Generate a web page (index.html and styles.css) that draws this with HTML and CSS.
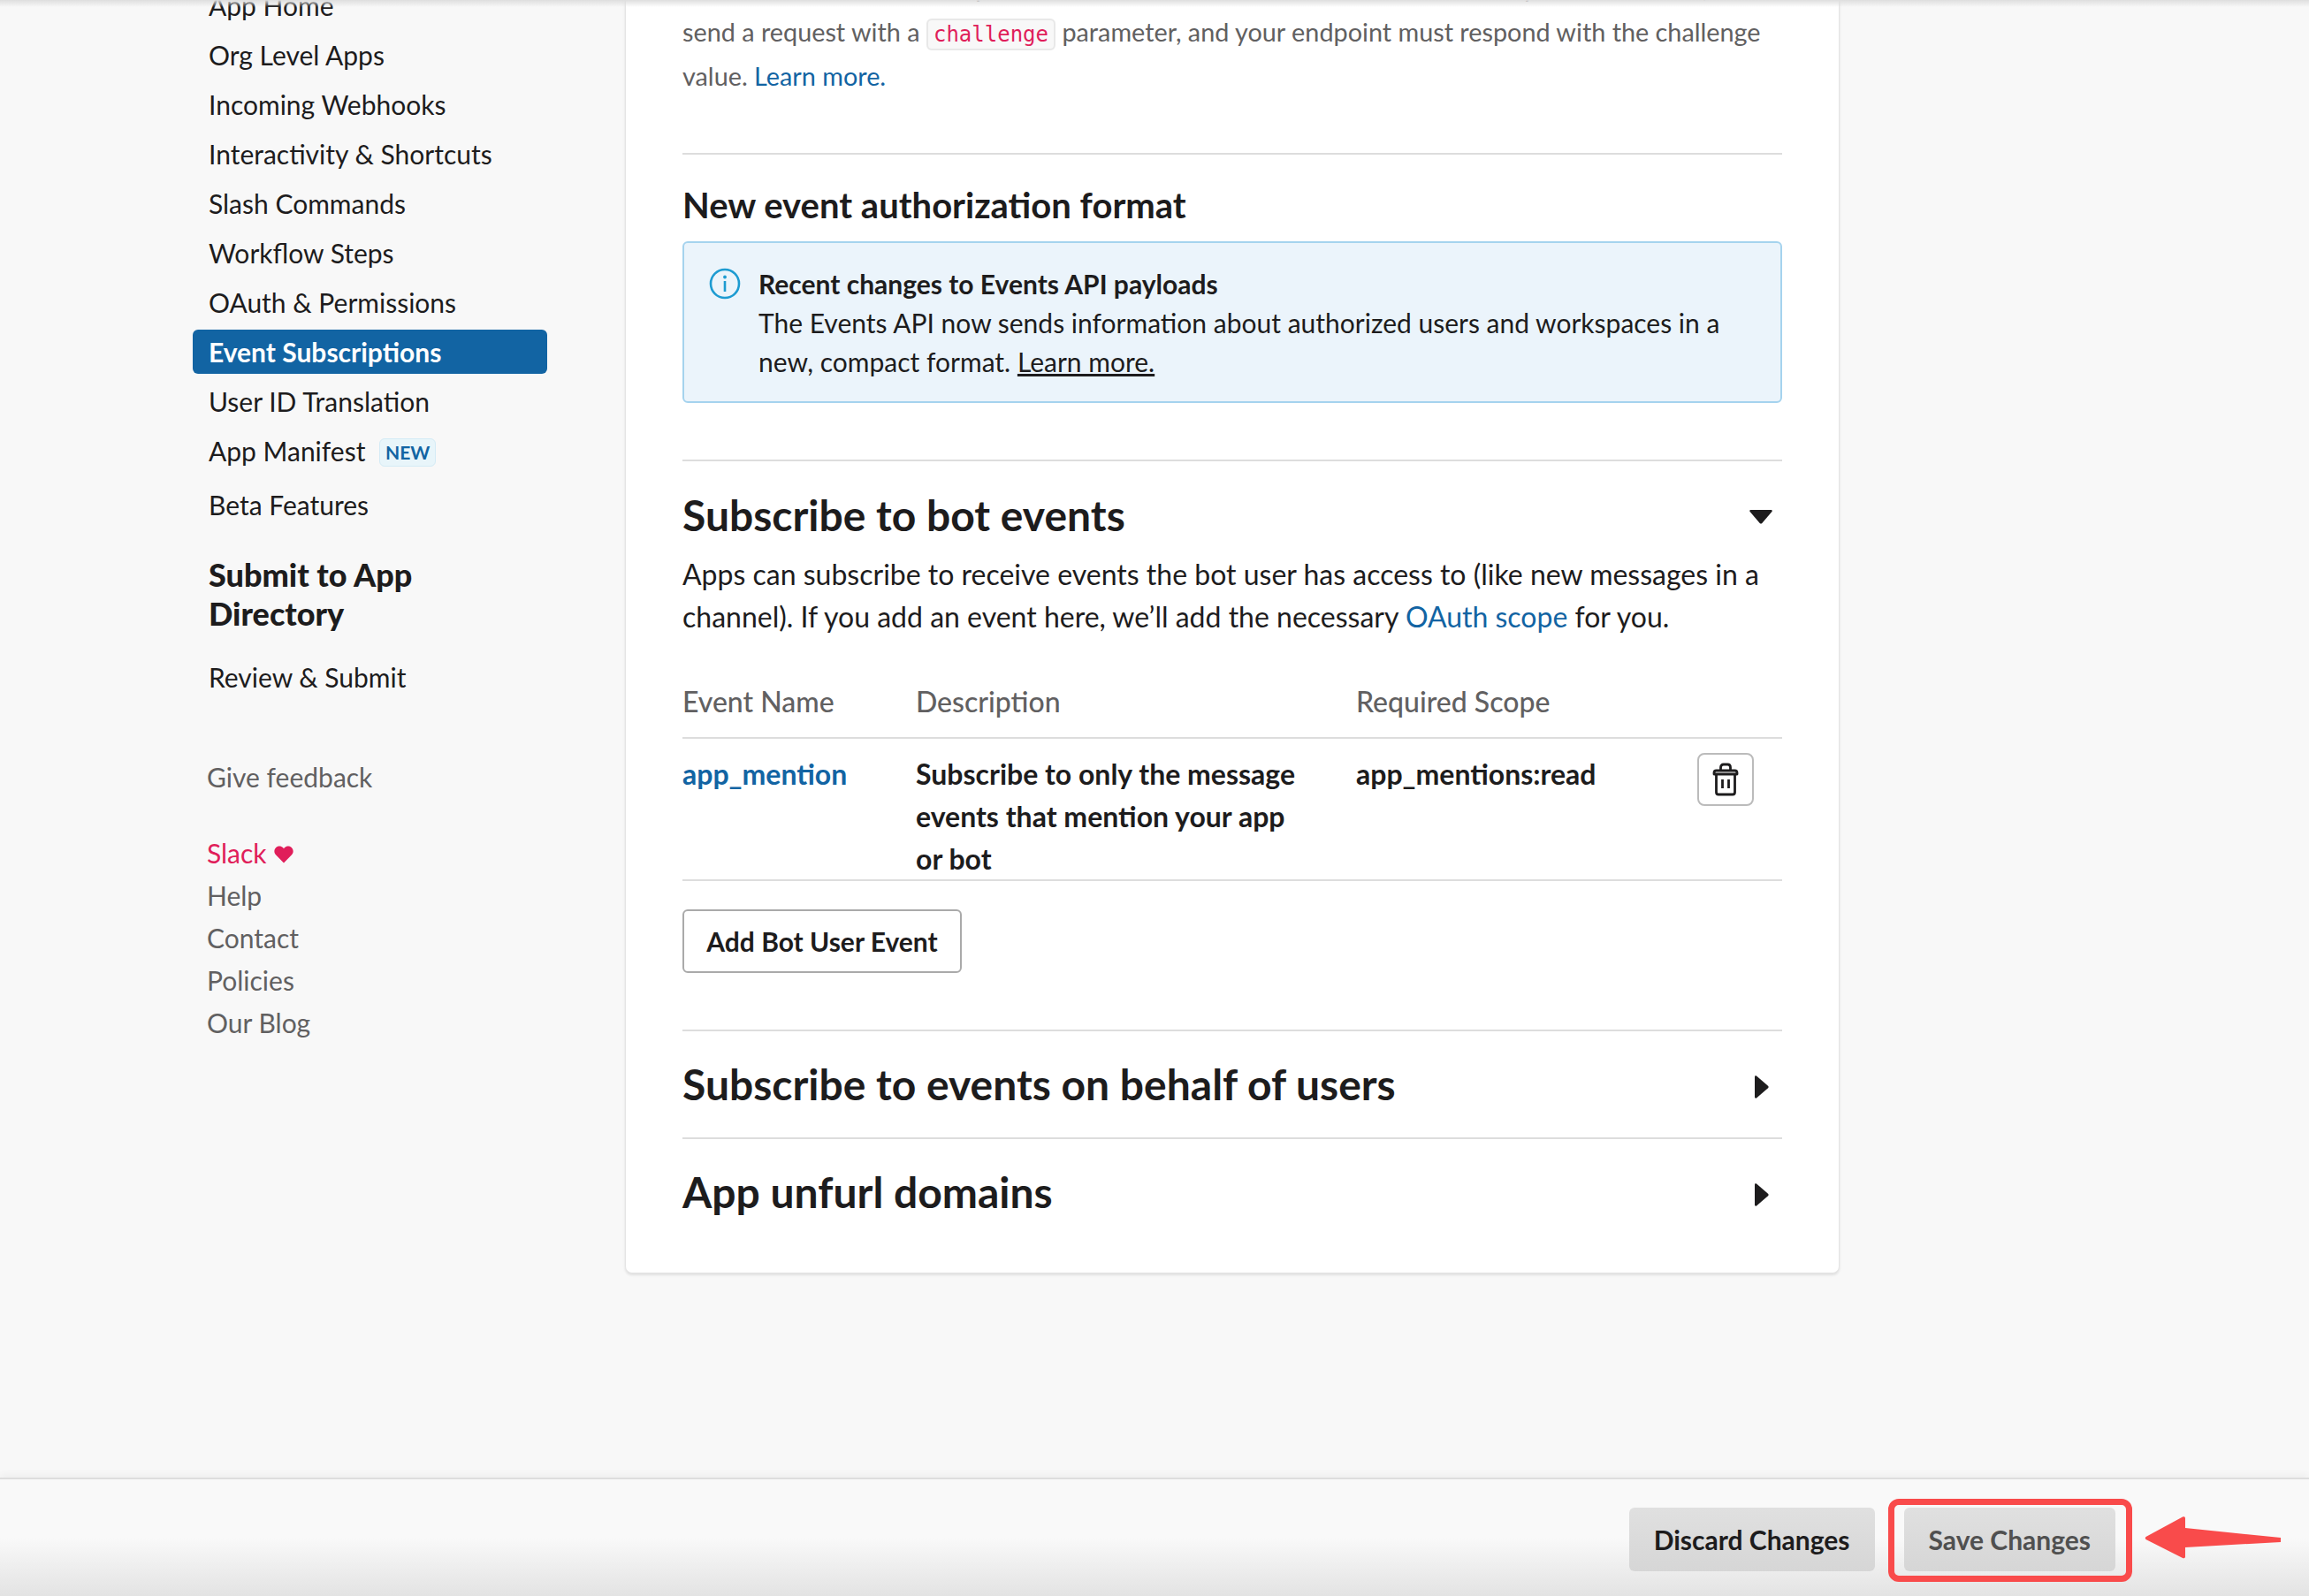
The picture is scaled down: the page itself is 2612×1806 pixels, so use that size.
FILE: index.html
```html
<!DOCTYPE html>
<html>
<head>
    <meta charset="utf-8">
    <title>Event Subscriptions</title>
    <link rel="stylesheet" href="styles.css">
</head>
<body>
    <div class="top-shadow"></div>

    <div class="scroller">
        <!-- sidebar -->
        <div class="sidebar">
            <ul class="nav">
                <li>App Home</li>
                <li>Org Level Apps</li>
                <li>Incoming Webhooks</li>
                <li>Interactivity &amp; Shortcuts</li>
                <li>Slash Commands</li>
                <li>Workflow Steps</li>
                <li>OAuth &amp; Permissions</li>
                <li class="active">Event Subscriptions</li>
                <li>User ID Translation</li>
                <li class="with-badge">App Manifest <span class="badge">NEW</span></li>
                <li>Beta Features</li>
            </ul>
            <h3 class="nav-title">Submit to App Directory</h3>
            <ul class="nav">
                <li>Review &amp; Submit</li>
            </ul>
            <div class="side-links feedback">Give feedback</div>
            <div class="side-links">
                <div class="slack">Slack
                    <svg class="heart" viewBox="0 0 22 20"><path d="M11 19.5 2.2 10.6C-.2 8.1-.2 4.6 1.9 2.4 4-.2 7.9-.2 10 2.1l1 1.1 1-1.1c2.1-2.3 6-2.3 8.1.3 2.1 2.2 2.1 5.7-.3 8.2z"/></svg>
                </div>
                <div>Help</div>
                <div>Contact</div>
                <div>Policies</div>
                <div>Our Blog</div>
            </div>
        </div>

        <!-- card -->
        <div class="card">
            <p class="intro">We’ll send HTTP POST requests to this URL when events occur. As soon as you enter a URL,<br>
                send a request with a <code>challenge</code> parameter, and your endpoint must respond with the challenge<br>
                value. <a href="#">Learn more.</a></p>

            <hr class="first-rule">

            <h4>New event authorization format</h4>
            <div class="notice">
                <svg class="info" viewBox="0 0 36 36"><circle cx="18" cy="18" r="16" fill="none" stroke="#1d9bd1" stroke-width="2.6"/><circle cx="18" cy="10.5" r="1.9" fill="#1d9bd1"/><rect x="16.7" y="15" width="2.6" height="12" fill="#1d9bd1"/></svg>
                <div>
                    <b>Recent changes to Events API payloads</b><br>
                    The Events API now sends information about authorized users and workspaces in a
                    new, compact format. <u>Learn more.</u>
                </div>
            </div>

            <hr class="second-rule">

            <div class="section-head">
                <h2>Subscribe to bot events</h2>
                <svg class="caret down" viewBox="0 0 26 16"><path d="M1.5 0h23c1 0 1.600 1.100.9 2L14.300 15c-.7.8-1.900.8-2.600 0L.6 2C-.1 1.100.5 0 1.500 0z"/></svg>
            </div>
            <p class="desc">Apps can subscribe to receive events the bot user has access to (like new messages in a
                channel). If you add an event here, we’ll add the necessary <a href="#">OAuth scope</a> for you.</p>

            <div class="events-row events-head">
                <div>Event Name</div>
                <div>Description</div>
                <div>Required Scope</div>
            </div>
            <div class="events-row events-body">
                <div><a href="#">app_mention</a></div>
                <div>Subscribe to only the message events that mention your app or bot</div>
                <div>app_mentions:read</div>
                <button class="trash">
                    <svg viewBox="0 0 30 38"><g fill="none" stroke="#1d1c1d" stroke-width="2.800" stroke-linejoin="round"><path d="M2 11.500c0-1.600 1-2.500 2.500-2.500h21c1.500 0 2.500.9 2.500 2.500V13H2z"/><path d="M4.500 13v20.500c0 1.400 1 2.500 2.500 2.500h16c1.500 0 2.500-1.100 2.500-2.500V13"/><path d="M9.500 9V5.500C9.500 3.500 10.700 2 12.700 2h4.600c2 0 3.200 1.500 3.200 3.500V9"/><path d="M11.500 19v10M18.500 19v10"/></g></svg>
                </button>
            </div>
            <button class="add-btn">Add Bot User Event</button>

            <div class="collapsed first">
                <h2>Subscribe to events on behalf of users</h2>
                <svg class="caret" viewBox="0 0 16 26"><path d="M0 1.500v23c0 1 1.100 1.600 2 .9L15 14.300c.8-.7.8-1.900 0-2.600L2 .6C1.100-.1 0 .5 0 1.500z"/></svg>
            </div>
            <div class="collapsed">
                <h2>App unfurl domains</h2>
                <svg class="caret" viewBox="0 0 16 26"><path d="M0 1.500v23c0 1 1.100 1.600 2 .9L15 14.300c.8-.7.8-1.900 0-2.600L2 .6C1.100-.1 0 .5 0 1.500z"/></svg>
            </div>
        </div>
    </div>

    <!-- footer bar -->
    <div class="save-bar">
        <button class="bar-btn">Discard Changes</button>
        <button class="bar-btn muted">Save Changes</button>
    </div>

    <!-- red markup on top of the screenshot -->
    <div class="markup-box"></div>
    <svg class="markup-arrow" viewBox="0 0 156 50"><path d="M1.500 24 43 1.500c1.500-.8 3-.2 3 1.500v11l108 11v5L46 36v10.500c0 1.700-1.500 2.300-3 1.500L1.500 27c-1-.6-1-2.400 0-3z"/></svg>
</body>
</html>
```

FILE: styles.css
```css
* {
    box-sizing: border-box;
}

html, body {
    margin: 0;
    height: 100%;
}

body {
    position: relative;
    display: flex;
    flex-direction: column;
    height: 1806px;
    overflow: hidden;
    background-color: #f8f8f8;
    color: #1d1c1d;
    font-family: Lato, sans-serif;
    font-size: 30px;
}

a {
    color: #1264a3;
    text-decoration: none;
}

/* shadow left by the fixed header above the fold */
.top-shadow {
    position: absolute;
    top: 0;
    left: 0;
    right: 0;
    height: 8px;
    z-index: 2;
    background: linear-gradient(#dedede, rgba(248, 248, 248, 0));
}

.scroller {
    flex: 1;
    display: flex;
    overflow: hidden;
    min-height: 0;
}

/* Sidebar */
.sidebar {
    width: 707px;
    flex: none;
    padding-left: 218px;
    margin-top: -19px;
}

.nav {
    list-style: none;
    margin: 0;
    padding: 0;
    width: 401px;
}

.nav li {
    height: 50px;
    line-height: 50px;
    margin-bottom: 6px;
    padding-left: 18px;
    border-radius: 6px;
    letter-spacing: 0;
}

.nav .active {
    background-color: #1264a3;
    color: #fff;
    font-weight: 700;
}

.nav .with-badge {
    margin-bottom: 11px;
}

.badge {
    display: inline-block;
    margin-left: 8px;
    padding: 0 6px;
    height: 32px;
    line-height: 30px;
    vertical-align: 2px;
    border: 1px solid #d4ebf6;
    border-radius: 6px;
    background-color: #e8f5fa;
    color: #1264a3;
    font-size: 21px;
    font-weight: 700;
}

.nav-title {
    width: 300px;
    margin: 32px 0 25px 18px;
    font-size: 36px;
    line-height: 44px;
    font-weight: 900;
}

.side-links {
    padding-left: 16px;
    color: #616061;
    line-height: 48px;
}

.feedback {
    margin: 64px 0 38px;
}

.slack {
    color: #e01e5a;
}

.heart {
    width: 22px;
    height: 20px;
    margin-left: 1px;
    fill: #e01e5a;
}

/* Card */
.card {
    width: 1374px;
    height: 1443px;
    margin-top: -2px;
    padding: 0 64px;
    flex: none;
    background-color: #fff;
    border: 1px solid #e4e4e4;
    border-top: 0;
    border-radius: 0 0 8px 8px;
    box-shadow: 0 2px 3px rgba(0, 0, 0, .1);
    overflow: hidden;
}

.card .intro {
    margin: -37px 0 0;
    color: #616061;
    font-size: 28.800px;
    line-height: 50px;
}

code {
    padding: 2px 6px;
    border: 2px solid #e8e8e8;
    border-radius: 6px;
    background-color: #f8f8f8;
    color: #e01e5a;
    font-family: "DejaVu Sans Mono", monospace;
    font-size: 24px;
    line-height: 1;
}

hr {
    height: 2px;
    margin: 0;
    border: 0;
    background-color: #ddd;
}

.first-rule {
    margin-top: 62px;
}

.second-rule {
    margin-top: 64px;
}

h4 {
    margin: 32px 0 16px;
    font-size: 40px;
    line-height: 50px;
    font-weight: 700;
}

.notice {
    display: flex;
    gap: 20px;
    height: 183px;
    padding: 24px 20px 0 28px;
    background-color: #ebf4fb;
    border: 2px solid #a5d3ee;
    border-radius: 6px;
    line-height: 44px;
}

.info {
    width: 36px;
    height: 36px;
    flex: none;
    margin-top: 4px;
}

.section-head, .collapsed {
    display: flex;
    justify-content: space-between;
    align-items: center;
}

h2 {
    margin: 0;
    font-size: 48px;
    line-height: 60px;
    font-weight: 700;
}

.section-head {
    margin-top: 31px;
    padding-right: 11px;
}

.caret {
    flex: none;
    margin-top: 4px;
    fill: #1d1c1d;
}

.caret.down {
    width: 26px;
    height: 16px;
}

.desc {
    margin: 13px 0 0;
    font-size: 32px;
    line-height: 48px;
}

.events-row {
    display: grid;
    grid-template-columns: 264px 498px 1fr auto;
    column-gap: 0;
    font-size: 32px;
    line-height: 48px;
}

.events-head {
    margin-top: 48px;
    padding-bottom: 16px;
    border-bottom: 2px solid #ddd;
    color: #616061;
    font-weight: 500;
}

.events-body {
    height: 161px;
    padding-top: 16px;
    padding-right: 32px;
    border-bottom: 2px solid #ddd;
    font-weight: 700;
}

.events-body > div:nth-child(2) {
    padding-right: 60px;
}

.trash {
    width: 64px;
    height: 60px;
    margin-top: 0;
    padding: 0;
    background-color: #fff;
    border: 2px solid #bbb;
    border-radius: 8px;
}

.trash svg {
    display: block;
    width: 30px;
    height: 38px;
    margin: 0 auto;
}

.add-btn {
    display: block;
    width: 316px;
    height: 72px;
    margin-top: 32px;
    padding: 0;
    background-color: #fff;
    border: 2px solid #aaa;
    border-radius: 6px;
    color: #1d1c1d;
    font-family: Lato, sans-serif;
    font-size: 30px;
    font-weight: 700;
}

.collapsed {
    height: 122px;
    padding-right: 15px;
    border-top: 2px solid #ddd;
}

.collapsed.first {
    margin-top: 64px;
}

.collapsed .caret {
    width: 16px;
    height: 26px;
    margin-top: 6px;
}

/* Bottom bar */
.save-bar {
    flex: none;
    display: flex;
    justify-content: flex-end;
    align-items: flex-start;
    gap: 33px;
    height: 134px;
    padding: 32px 219px 0 0;
    border-top: 2px solid #ddd;
    box-shadow: 0 -4px 8px rgba(0, 0, 0, .04);
    background: linear-gradient(#f9f9f9 50%, #e3e3e3);
}

.bar-btn {
    height: 72px;
    padding: 0 28px;
    border: 0;
    border-radius: 6px;
    background: linear-gradient(#e0e0e0, #d6d6d6);
    color: #1d1c1d;
    font-family: Lato, sans-serif;
    font-size: 30px;
    font-weight: 700;
}

.bar-btn.muted {
    color: #505050;
}

/* Red annotation */
.markup-box {
    position: absolute;
    left: 2136px;
    top: 1696px;
    width: 276px;
    height: 94px;
    border: 7px solid #f94b4b;
    border-radius: 12px;
}

.markup-arrow {
    position: absolute;
    left: 2426px;
    top: 1715px;
    width: 156px;
    height: 50px;
    fill: #f94b4b;
}
```
